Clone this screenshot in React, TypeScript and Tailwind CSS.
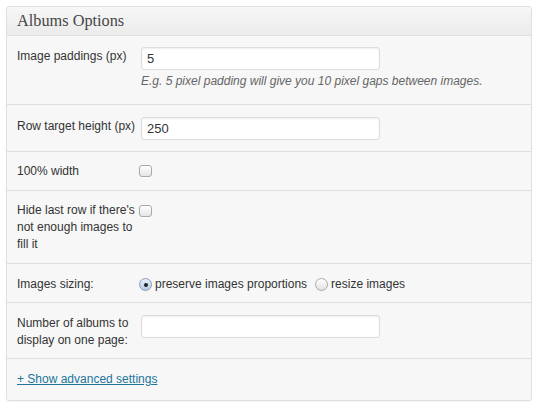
import React from "react";

const sans = { fontFamily: '"Liberation Sans", Arial, Helvetica, sans-serif' };

function TextInput({ value }: { value?: string }) {
  return (
    <div className="ml-[2px] flex h-[23px] w-[239px] items-center rounded-[3px] border border-[#dcdcdc] bg-white pl-[5px] text-[13px] text-[#333] shadow-[inset_0_1px_2px_rgba(0,0,0,0.07)]">
      {value}
    </div>
  );
}

function Checkbox({ className = "" }: { className?: string }) {
  return (
    <span
      className={
        "block h-[12px] w-[13px] rounded-[3px] border border-[#a9a9a9] bg-gradient-to-b from-white to-[#e6e6e6] shadow-[0_1px_0_rgba(255,255,255,0.8)] " +
        className
      }
    />
  );
}

function Radio({ checked }: { checked?: boolean }) {
  return checked ? (
    <span className="flex h-[13px] w-[13px] shrink-0 items-center justify-center rounded-full border border-[#8c9bb0] bg-gradient-to-b from-[#e9f1fb] to-[#b3cbe8]">
      <span className="block h-[4px] w-[4px] rounded-full bg-[#222]" />
    </span>
  ) : (
    <span className="block h-[13px] w-[13px] shrink-0 rounded-full border border-[#a9a9a9] bg-gradient-to-b from-white to-[#e2e2e2]" />
  );
}

export default function App() {
  return (
    <div className="bg-white p-[6px] pb-[7px]" style={sans}>
      <div className="rounded-[3px] border border-[#dfdfdf] bg-[#f7f7f7] text-[12px] leading-[17px] text-[#333] shadow-[0_1px_1px_rgba(0,0,0,0.04)]">
        <div className="flex h-[29px] items-center rounded-t-[3px] border-b border-[#dfdfdf] bg-gradient-to-b from-[#f7f7f7] to-[#ebebeb] px-[10px]">
          <h3
            className="text-[16.3px] leading-[20px] text-[#464646]"
            style={{ fontFamily: '"Liberation Serif", Georgia, "Times New Roman", serif' }}
          >
            Albums Options
          </h3>
        </div>

        <div className="flex px-[10px] pb-[14px] pt-[11px]">
          <div className="w-[122px] shrink-0 pt-[1px]">Image paddings (px)</div>
          <div>
            <TextInput value="5" />
            <p className="ml-[2px] mt-[3px] italic text-[#666]">
              E.g. 5 pixel padding will give you 10 pixel gaps between images.
            </p>
          </div>
        </div>

        <div className="flex border-t border-[#dfdfdf] px-[10px] pb-[11px] pt-[12px]">
          <div className="w-[122px] shrink-0 pt-[1px]">Row target height (px)</div>
          <TextInput value="250" />
        </div>

        <div className="flex border-t border-[#dfdfdf] px-[10px] pb-[10px] pt-[11px]">
          <div className="w-[122px] shrink-0">100% width</div>
          <Checkbox className="mt-[2px]" />
        </div>

        <div className="flex border-t border-[#dfdfdf] px-[10px] pb-[10px] pt-[11px]">
          <div className="w-[122px] shrink-0">
            Hide last row if there's not enough images to fill it
          </div>
          <Checkbox className="mt-[3px]" />
        </div>

        <div className="flex items-center border-t border-[#dfdfdf] px-[10px] pb-[9px] pt-[12px]">
          <div className="w-[122px] shrink-0">Images sizing:</div>
          <div className="flex items-center">
            <Radio checked />
            <span className="ml-[3px]">preserve images proportions</span>
            <span className="ml-[8px]">
              <Radio />
            </span>
            <span className="ml-[3px]">resize images</span>
          </div>
        </div>

        <div className="flex border-t border-[#dfdfdf] px-[10px] pb-[9px] pt-[12px]">
          <div className="w-[122px] shrink-0">
            Number of albums to display on one page:
          </div>
          <TextInput />
        </div>

        <div className="border-t border-[#dfdfdf] px-[10px] pb-[12px] pt-[12px]">
          <a href="#" className="text-[#21759b] underline">
            + Show advanced settings
          </a>
        </div>
      </div>
    </div>
  );
}
